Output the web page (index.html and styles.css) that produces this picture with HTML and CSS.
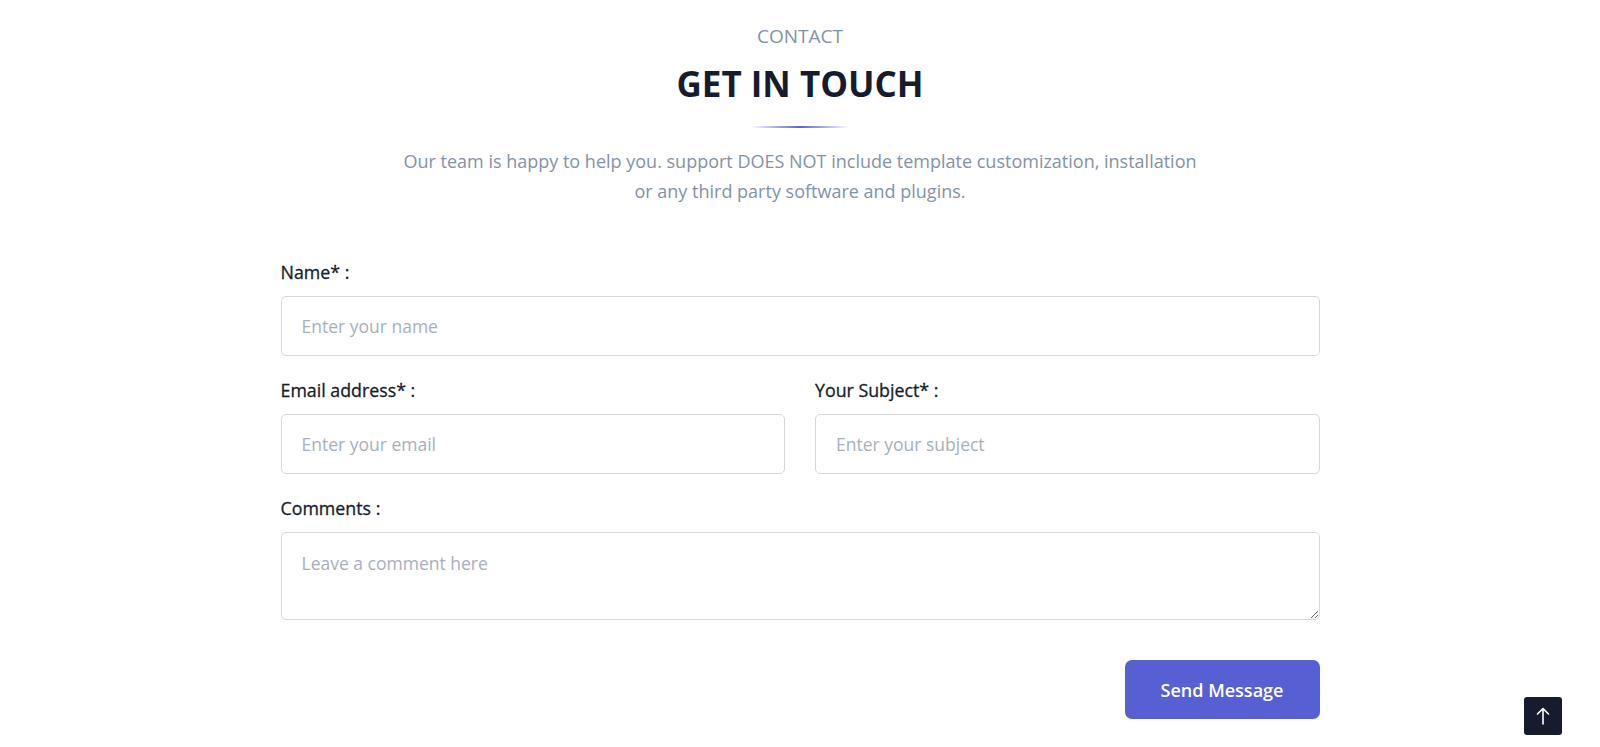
FILE: index.html
```html
<!DOCTYPE html>
<html lang="en">
<head>
<meta charset="utf-8">
<title>Contact</title>
<link rel="stylesheet" href="styles.css">
</head>
<body>
<section class="contact">
  <header class="heading">
    <p class="eyebrow">CONTACT</p>
    <h1 class="title">GET IN TOUCH</h1>
    <div class="divider"></div>
    <p class="lead">Our team is happy to help you. support DOES NOT include template customization, installation<br>or any third party software and plugins.</p>
  </header>
  <form class="form">
    <div class="field">
      <label class="label" for="name">Name* :</label>
      <input class="control" id="name" type="text" placeholder="Enter your name">
    </div>
    <div class="row">
      <div class="field">
        <label class="label" for="email">Email address* :</label>
        <input class="control" id="email" type="email" placeholder="Enter your email">
      </div>
      <div class="field">
        <label class="label" for="subject">Your Subject* :</label>
        <input class="control" id="subject" type="text" placeholder="Enter your subject">
      </div>
    </div>
    <div class="field">
      <label class="label" for="comments">Comments :</label>
      <textarea class="control area" id="comments" placeholder="Leave a comment here"></textarea>
    </div>
    <div class="actions">
      <button class="btn" type="button">Send Message</button>
    </div>
  </form>
</section>
<a class="back-top" href="#" aria-label="Back to top">
  <svg width="14" height="18" viewBox="0 0 14 18" fill="none" stroke="#ffffff" stroke-width="1.6" stroke-linecap="round" stroke-linejoin="round"><path d="M7 17V1.5M1.5 7L7 1.5L12.5 7"/></svg>
</a>
</body>
</html>
```
FILE: styles.css
```css
* { box-sizing: border-box; }
html, body { margin: 0; padding: 0; background: #ffffff; }
body {
  font-family: "Open Sans", "Noto Sans", "Liberation Sans", sans-serif;
  color: #161c2d;
}
.contact {
  width: 1039px;
  margin: 0 auto;
  padding-top: 24px;
}
.heading { text-align: center; }
.eyebrow {
  margin: 0;
  font-size: 19px;
  line-height: 24px;
  color: #8492a6;
}
.title {
  margin: 14px 0 0;
  font-size: 35px;
  line-height: 44px;
  font-weight: 700;
  color: #161c2d;
}
.divider {
  width: 100px;
  height: 2px;
  margin: 20px auto 0;
  background: linear-gradient(90deg, rgba(90,100,212,0) 0%, #5a64d4 50%, rgba(90,100,212,0) 100%);
}
.lead {
  margin: 18px 0 0;
  font-size: 18px;
  line-height: 30px;
  color: #8492a6;
}
.form {
  margin-top: 55px;
  display: flex;
  flex-direction: column;
  gap: 23px;
}
.row {
  display: grid;
  grid-template-columns: 1fr 1fr;
  gap: 30px;
}
.field { display: flex; flex-direction: column; }
.label {
  font-size: 17.8px;
  line-height: 22px;
  font-weight: 400;
  -webkit-text-stroke: 0.3px #161c2d;
  color: #161c2d;
  margin-bottom: 13px;
}
.control {
  width: 100%;
  height: 60px;
  border: 1px solid #d5d8dc;
  border-radius: 5px;
  padding: 0 20px;
  font-family: inherit;
  font-size: 17.5px;
  color: #161c2d;
  background: #fff;
  outline: none;
}
.control::placeholder { color: #a8b0bb; }
.area {
  height: 88px;
  padding-top: 18px;
  resize: vertical;
}
.actions {
  display: flex;
  justify-content: flex-end;
  margin-top: 17px;
}
.btn {
  width: 195px;
  height: 59px;
  border: none;
  border-radius: 7px;
  background: #5660d3;
  color: #ffffff;
  font-family: inherit;
  font-size: 18px;
  font-weight: 600;
  cursor: pointer;
}
.back-top {
  position: fixed;
  right: 38px;
  bottom: 12px;
  width: 38px;
  height: 38px;
  border-radius: 3px;
  background: #161c2d;
  display: flex;
  align-items: center;
  justify-content: center;
}
```
